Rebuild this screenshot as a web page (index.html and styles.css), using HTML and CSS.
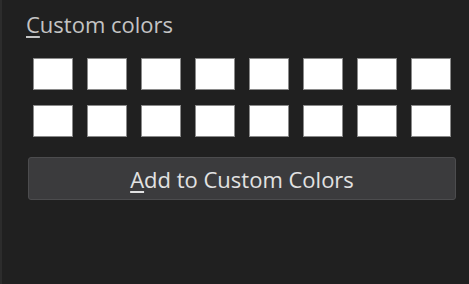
FILE: index.html
```html
<!DOCTYPE html>
<html lang="en">
<head>
    <meta charset="UTF-8">
    <title>Custom colors</title>
    <link rel="stylesheet" href="styles.css">
</head>
<body>
    <div class="panel">
        <div class="label"><u>C</u>ustom colors</div>
        <div class="swatches">
            <div class="swatch"></div>
            <div class="swatch"></div>
            <div class="swatch"></div>
            <div class="swatch"></div>
            <div class="swatch"></div>
            <div class="swatch"></div>
            <div class="swatch"></div>
            <div class="swatch"></div>
            <div class="swatch"></div>
            <div class="swatch"></div>
            <div class="swatch"></div>
            <div class="swatch"></div>
            <div class="swatch"></div>
            <div class="swatch"></div>
            <div class="swatch"></div>
            <div class="swatch"></div>
        </div>
        <button class="add-button"><u>A</u>dd to Custom Colors</button>
    </div>
</body>
</html>
```
FILE: styles.css
```css
html, body {
    margin: 0;
    height: 100%;
    background-color: #202020;
}

body {
    font-family: 'Open Sans', 'Noto Sans', sans-serif;
}

.panel {
    height: 100%;
    box-sizing: border-box;
    border-left: 2px solid #2c2c2c;
    padding: 10px 0 0 24px;
}

.label {
    color: #c4c4c4;
    font-size: 22px;
    line-height: 28px;
}

.label u,
.add-button u {
    text-underline-offset: 3px;
}

.swatches {
    display: grid;
    grid-template-columns: repeat(8, 40px);
    column-gap: 14px;
    row-gap: 15px;
    margin: 20px 0 0 7px;
}

.swatch {
    height: 32px;
    box-sizing: border-box;
    background-color: #fff;
    border: 1px solid #8a8a8a;
}

.add-button {
    display: block;
    width: 428px;
    height: 43px;
    margin: 20px 0 0 2px;
    background-color: #3b3b3d;
    border: 1px solid #4c4c4e;
    border-radius: 3px;
    color: #e2e2e2;
    font-family: inherit;
    font-size: 22px;
    padding: 0;
}
```
